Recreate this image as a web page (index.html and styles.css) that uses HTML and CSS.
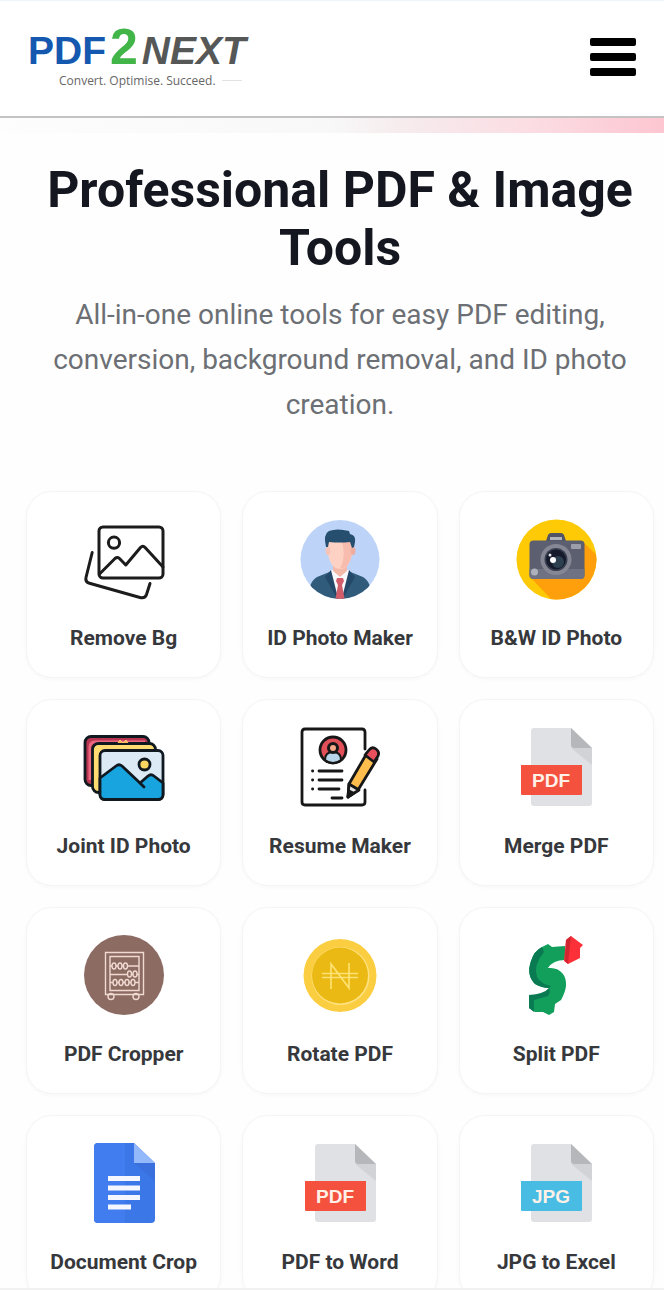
FILE: index.html
```html
<!DOCTYPE html>
<html lang="en">
<head>
<meta charset="utf-8">
<meta name="viewport" content="width=device-width, initial-scale=1">
<title>PDF2NEXT</title>
<link rel="stylesheet" href="styles.css">
</head>
<body>
<div class="page">
  <header class="topbar">
    <a class="logo" href="#">
      <span class="logo-name"><span class="logo-pdf">PDF</span><span class="logo-two">2</span><span class="logo-next">NEXT</span></span>
      <span class="logo-tagline">Convert. Optimise. Succeed.</span>
    </a>
    <button class="menu-button" type="button" aria-label="Open menu">
      <svg class="menu-icon" viewBox="0 0 46 38"><rect width="46" height="8" rx="2"/><rect y="15" width="46" height="8" rx="2"/><rect y="30" width="46" height="8" rx="2"/></svg>
    </button>
  </header>
  <div class="accent"></div>
  <main class="content">
    <h1 class="title">Professional PDF &amp; Image Tools</h1>
    <p class="subtitle">All-in-one online tools for easy PDF editing, conversion, background removal, and ID photo creation.</p>
    <nav class="tools" aria-label="Tools">
      <a class="card" href="#">
        <svg class="icon" viewBox="0 0 80 80" fill="none" stroke="#1c1c1c" stroke-width="3" stroke-linejoin="round" stroke-linecap="round"><rect x="15" y="8" width="64" height="51" rx="4"/><circle cx="30" cy="23.700" r="5.600"/><path d="M16 54.500 31 39.500q2.300-2 4.500 0L41.800 46 56.500 28.500q2.300-2.600 4.600 0L79 48M8.200 33.500 2 58.500q-1 4.500 3.500 5.800L56 78.500q5 1.300 6.500-3L66 64.500"/></svg>
        <span class="label">Remove Bg</span>
      </a>
      <a class="card" href="#">
        <svg class="icon" viewBox="0 0 80 80"><defs><clipPath id="portrait"><circle cx="40" cy="40.500" r="39.500"/></clipPath></defs><circle cx="40" cy="40.500" r="39.500" fill="#bdd4f8"/><g clip-path="url(#portrait)"><path d="M8 82q0-19 9-24l15-6h16l15 6q9 5 9 24z" fill="#315b7b"/><path d="M31 51h18l2 7-11 25-11-25z" fill="#f7f9fd"/><path d="M33 40h14v12l-7 6-7-6z" fill="#f3b9ab"/><path d="M31 51 25 58l14 25zM49 51l6 7-14 25z" fill="#23486a"/><path d="M37 59h6l1 3-2 4 3 16H35l3-16-2-4z" fill="#d35e6b"/></g><path d="M28 22q12-2 24 0v10q0 10-6 16-6 4-12 0-6-6-6-16z" fill="#fdd2c5"/><path d="M41 21h11v11q0 10-6 16l-6 2q7-15 1-29z" fill="#f8bcae"/><ellipse cx="28" cy="32" rx="2.500" ry="4" fill="#f8c4b7"/><ellipse cx="53" cy="32" rx="2.500" ry="4" fill="#efad9f"/><path d="M26 28q-3-13 3-16 8-3 20 0l1 3q6 1 5 8l-1 5-2 1-2-6q-10 1-21 0l-1 5z" fill="#264e6e"/></svg>
        <span class="label">ID Photo Maker</span>
      </a>
      <a class="card" href="#">
        <svg class="icon" viewBox="0 0 80 80"><defs><clipPath id="sunny"><circle cx="40.500" cy="40.500" r="40"/></clipPath></defs><circle cx="40.500" cy="40.500" r="40" fill="#fdca05"/><path d="M67 23 83 38v43H36L15 59z" fill="#ff9f0c" clip-path="url(#sunny)"/><path d="M30 22l2-6q1-2 3-2h10q2 0 3 2l2 6z" fill="#505465"/><path d="M34 18h12v3H34z" fill="#b4b4bb"/><rect x="13.500" y="21.500" width="55" height="38.500" rx="4" fill="#5b5f70"/><path d="M13.500 50h55v6q0 4-4 4h-47q-4 0-4-4z" fill="#6f7282"/><rect x="55" y="25" width="10" height="5" rx="1" fill="#9c9fab"/><circle cx="18.500" cy="53" r="3.500" fill="#afb2bb"/><circle cx="40" cy="40.500" r="15.500" fill="#858894"/><circle cx="40" cy="40.500" r="11.500" fill="#3b4052"/><circle cx="40" cy="40.500" r="10" fill="#151b2a"/><circle cx="42" cy="43" r="6" fill="#2d4050"/><circle cx="37" cy="41" r="3" fill="#fff"/><circle cx="34" cy="36" r="1.500" fill="#e5e7ec"/></svg>
        <span class="label">B&amp;W ID Photo</span>
      </a>
      <a class="card" href="#">
        <svg class="icon" viewBox="0 0 80 80" stroke="#101820" stroke-width="2.800" stroke-linejoin="round"><rect x="1" y="9.500" width="64" height="49" rx="6" fill="#b73551"/><path d="M6 53V20q0-5 5-5h50" fill="none" stroke="#ec6680" stroke-width="3"/><rect x="8.500" y="16.500" width="63" height="49" rx="6" fill="#ffdc72"/><path d="M34 16l2-3 3 3 3-3 2 3" fill="#fbb25c" stroke="#ffcc70" stroke-width="1"/><rect x="16" y="23.500" width="63" height="49" rx="5" fill="#dceaf6"/><path d="M16 51 32 39q3-2.500 6 0l18 17 8-7q3-2.500 6 0l9 7v11.500q0 5-5 5H21q-5 0-5-5z" fill="#17a4df"/><path d="M56 56l4 4" fill="none" stroke-linecap="round"/><circle cx="60.500" cy="37.500" r="5.500" fill="#fbd761"/></svg>
        <span class="label">Joint ID Photo</span>
      </a>
      <a class="card" href="#">
        <svg class="icon" viewBox="0 0 80 80" fill="none" stroke="#171717" stroke-width="2.800" stroke-linejoin="round" stroke-linecap="round"><path d="M65 22V5q0-3-3-3H5Q2 2 2 5v70q0 3 3 3h57q3 0 3-3V63"/><circle cx="33" cy="23" r="13" fill="#e14f59"/><path d="M25 33q0-8 8-8t8 8q-8 6-16 0z" fill="#b8d4e8" stroke-width="2"/><circle cx="33" cy="21" r="4.500" fill="#f7a98a" stroke-width="3"/><path d="M19 44h23M19 53h23M19 62h20M32 71h10M12.500 44h.2M12.500 53h.2M12.500 62h.2"/><path d="M48 70l1-13 18-31 10 6-19 31z" fill="#ffbd4d"/><path d="M65 28l4-5q3-4 7-1t2 7l-4 6z" fill="#e9505e"/><path d="M48 70l1-13 10 6z" fill="#e6e6e6"/><path d="M48 70l1-6 4 2z" fill="#171717"/></svg>
        <span class="label">Resume Maker</span>
      </a>
      <a class="card" href="#">
        <svg class="icon" viewBox="0 0 80 80"><path d="M18 1h37l21 20v55q0 3-3 3H18q-3 0-3-3V4q0-3 3-3z" fill="#e0e1e4"/><path d="M55 21h21v17z" fill="#d1d3d7"/><path d="M55 1l21 20H58q-3 0-3-3z" fill="#b5b7bb"/><path d="M5 38h61v29q0 1-1 1H6q-1 0-1-1z" fill="#f5513f"/><text class="badge" x="35" y="60">PDF</text></svg>
        <span class="label">Merge PDF</span>
      </a>
      <a class="card" href="#">
        <svg class="icon" viewBox="0 0 80 80"><circle cx="40" cy="40" r="40" fill="#8c6b63"/><g fill="none" stroke="#efd9d1" stroke-width="1.400"><path d="M21.500 17.500h38v42h-38zM26 21.500h29v34H26zM26 31h29M26 39.500h29M26 47.500h29"/><circle cx="27" cy="61.500" r="3"/><circle cx="52" cy="61.500" r="3"/><g fill="#8c6b63"><ellipse cx="30" cy="31" rx="2" ry="3"/><ellipse cx="36" cy="31" rx="2" ry="3"/><ellipse cx="41.500" cy="31" rx="2" ry="3"/><ellipse cx="45.500" cy="39" rx="2" ry="3"/><ellipse cx="51" cy="39" rx="2" ry="3"/><ellipse cx="31" cy="47.500" rx="2" ry="3"/><ellipse cx="37" cy="47.500" rx="2" ry="3"/><ellipse cx="43" cy="47.500" rx="2" ry="3"/><ellipse cx="49" cy="47.500" rx="2" ry="3"/></g></g></svg>
        <span class="label">PDF Cropper</span>
      </a>
      <a class="card" href="#">
        <svg class="icon" viewBox="0 0 80 80"><circle cx="40" cy="40.500" r="36.500" fill="#fbce42"/><circle cx="40.500" cy="41" r="29" fill="#ffe282"/><circle cx="40" cy="40.500" r="28" fill="#ebb914"/><g fill="none" stroke="#ffe374" stroke-width="1.600"><path d="M31 54V29l18 24V28M22 38.500h36M22 42.500h36"/></g></svg>
        <span class="label">Rotate PDF</span>
      </a>
      <a class="card" href="#">
        <svg class="icon" viewBox="0 0 80 80"><path d="M26 12l6-3 4 3 13-1v14q-12 0-17 8 10-1 15 6 7 10-2 26l-6 4-1 8-5 3-6-3h-8l-6-4V60q17 1 20-7-7 0-14-4-9-9-4-23 3-10 11-14z" fill="#119f5b"/><path d="M26 12q-8 4-11 14-5 14 4 23 7 4 14 4l2-2q-10-2-14-9-4-12 7-25zM13 60v13l5 4V65l14-4q3-4 1-8-5 6-20 7z" fill="#0a7a52"/><path d="M50 5l5-4 12 9-3 3v10l-12 6-4-3z" fill="#fb3038"/><path d="M50 5l5-4-3 28-3-3z" fill="#cf2631"/></svg>
        <span class="label">Split PDF</span>
      </a>
      <a class="card" href="#">
        <svg class="icon" viewBox="0 0 80 80"><path d="M14 0h36l21 20v56q0 4-4 4H14q-4 0-4-4V4q0-4 4-4z" fill="#3c77e8"/><path d="M14 0h27v80H14q-4 0-4-4V4q0-4 4-4z" fill="#427df0"/><path d="M50 20h21v18z" fill="#3a70de"/><path d="M50 0l21 20H50z" fill="#94b9fb"/><path d="M24 33h32v5H24zM24 42.500h32v5H24zM24 52h32v5H24zM24 61.500h23v5H24z" fill="#f4f7ff"/></svg>
        <span class="label">Document Crop</span>
      </a>
      <a class="card" href="#">
        <svg class="icon" viewBox="0 0 80 80"><path d="M18 1h37l21 20v55q0 3-3 3H18q-3 0-3-3V4q0-3 3-3z" fill="#e0e1e4"/><path d="M55 21h21v17z" fill="#d1d3d7"/><path d="M55 1l21 20H58q-3 0-3-3z" fill="#b5b7bb"/><path d="M5 38h61v29q0 1-1 1H6q-1 0-1-1z" fill="#f5513f"/><text class="badge" x="35" y="60">PDF</text></svg>
        <span class="label">PDF to Word</span>
      </a>
      <a class="card" href="#">
        <svg class="icon" viewBox="0 0 80 80"><path d="M18 1h37l21 20v55q0 3-3 3H18q-3 0-3-3V4q0-3 3-3z" fill="#e0e1e4"/><path d="M55 21h21v17z" fill="#d1d3d7"/><path d="M55 1l21 20H58q-3 0-3-3z" fill="#b5b7bb"/><path d="M5 38h61v29q0 1-1 1H6q-1 0-1-1z" fill="#49bce4"/><text class="badge" x="35" y="60">JPG</text></svg>
        <span class="label">JPG to Excel</span>
      </a>
    </nav>
  </main>
</div>
</body>
</html>
```
FILE: styles.css
```css
* { box-sizing: border-box; }

body {
  margin: 0;
  background: #fefefe;
  color: #14171f;
  font-family: Roboto, "Liberation Sans", sans-serif;
}

.page {
  height: 100vh;
  overflow: hidden;
  border-top: 1px solid #edf4fa;
  border-bottom: 2px solid #f1f1f1;
}

.topbar {
  display: flex;
  align-items: center;
  justify-content: space-between;
  height: 117px;
  padding: 0 28px 4px;
  border-bottom: 2px solid #c4c2c2;
  background: #fff;
}

.logo {
  display: flex;
  flex-direction: column;
  color: #666;
  font-family: "Liberation Sans", sans-serif;
  text-decoration: none;
}

.logo-name {
  display: flex;
  align-items: baseline;
  gap: 4px;
  font-size: 39px;
  font-weight: 700;
  line-height: 44px;
}

.logo-pdf { color: #1558b0; }
.logo-two { color: #42b549; font-size: 50px; }
.logo-next { color: #555857; font-style: italic; }

.logo-tagline {
  display: flex;
  align-items: center;
  gap: 6px;
  padding-left: 31px;
  font-family: "Open Sans", sans-serif;
  font-size: 12px;
  line-height: 16px;
}

.logo-tagline::after {
  content: "";
  width: 20px;
  height: 1px;
  background: #e2e2e2;
}

.menu-button {
  display: flex;
  padding: 0;
  border: 0;
  background: none;
}

.menu-icon { width: 46px; height: 38px; }

.accent {
  height: 15px;
  background: linear-gradient(90deg, #fdfdfd 0%, #f8f8f8 50%, #f6ecee 60%, #fbdde3 80%, #fdc6d1 100%);
}

.content { padding: 28px 10px 0 26px; }

.title {
  margin: 0;
  font-size: 50px;
  font-weight: 700;
  line-height: 58px;
  text-align: center;
}

.subtitle {
  margin: 15px 0 64px;
  color: #6c6f74;
  font-size: 28px;
  line-height: 45px;
  text-align: center;
}

.tools {
  display: grid;
  grid-template-columns: repeat(3, 1fr);
  gap: 21px;
}

.card {
  display: flex;
  flex-direction: column;
  align-items: center;
  gap: 25px;
  padding: 27px 0 25px;
  border: 1px solid #f5f5f5;
  border-radius: 26px;
  background: #fff;
  box-shadow: 0 1px 4px #00000008;
  color: #36383c;
  text-decoration: none;
}

.icon { width: 80px; height: 80px; overflow: visible; }

.label {
  font-size: 21px;
  font-weight: 700;
  line-height: 28px;
  white-space: nowrap;
}

.badge {
  fill: #fff1e8;
  font-family: "Liberation Sans", sans-serif;
  font-size: 19px;
  font-weight: 700;
  text-anchor: middle;
}
```
